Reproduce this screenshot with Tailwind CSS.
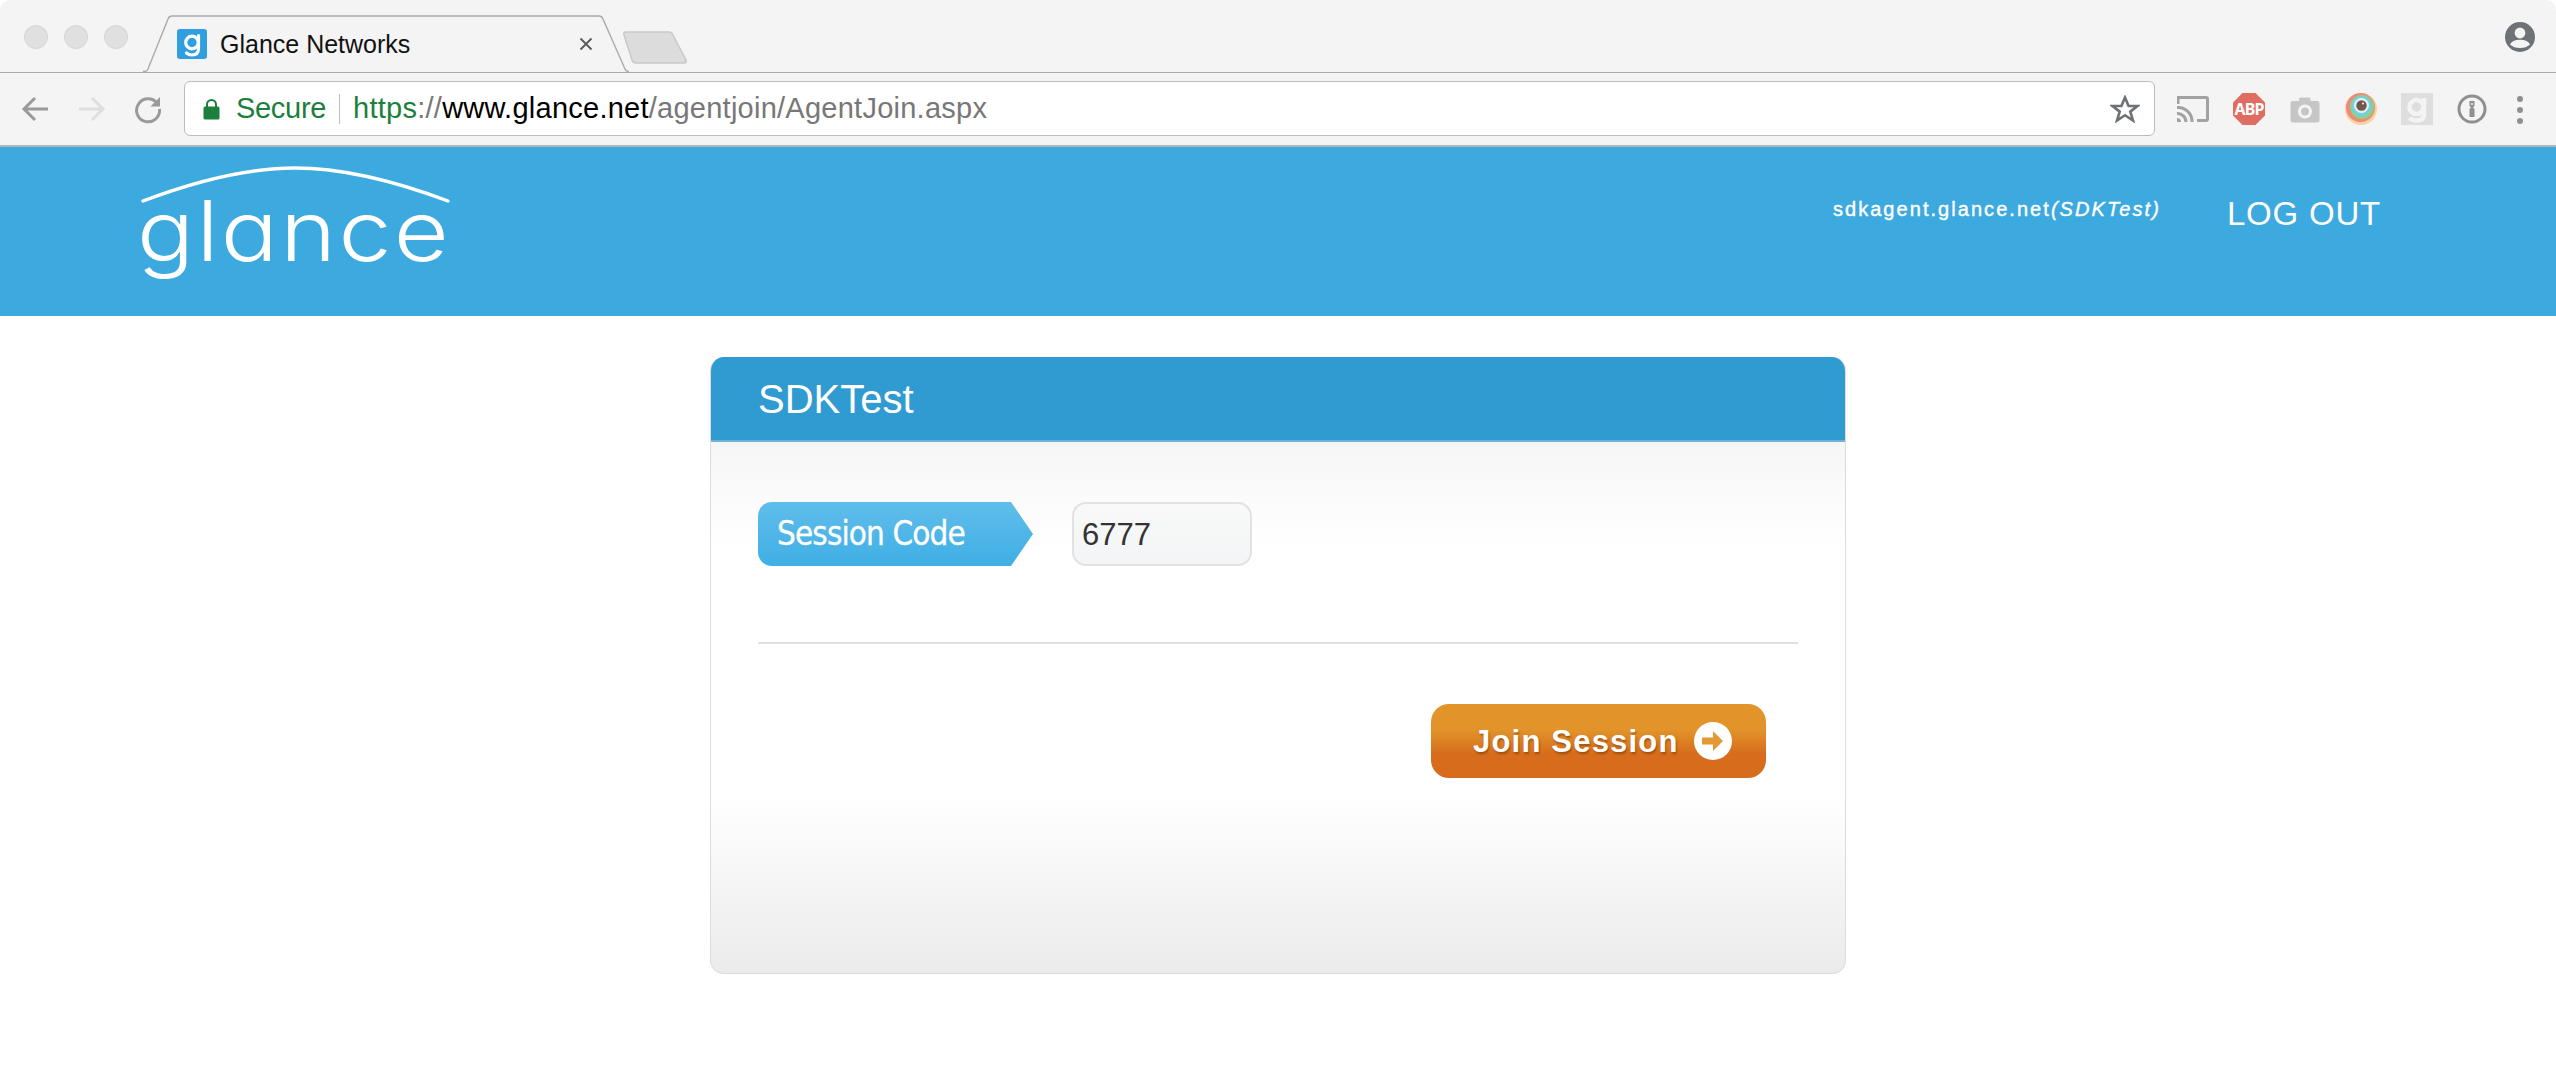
<!DOCTYPE html>
<html><head><meta charset="utf-8">
<script src="https://cdn.jsdelivr.net/npm/@tailwindcss/browser@4"></script>
</head>
<body class="bg-white font-['Liberation_Sans',sans-serif]">
<div class="w-[2556px] h-[1073px] overflow-hidden flex flex-col bg-white">
  <!-- tab strip -->
  <div class="h-[73px] bg-[#f4f4f4] rounded-t-[10px] border-b border-[#a9a9a9] flex items-end pl-[24px] relative">
    <div class="flex gap-[16px] h-[71px] items-center w-[119px] self-start pt-[3px]">
      <span class="w-[24px] h-[24px] rounded-full bg-[#e0e0e0] border border-[#d4d4d4]"></span>
      <span class="w-[24px] h-[24px] rounded-full bg-[#e0e0e0] border border-[#d4d4d4]"></span>
      <span class="w-[24px] h-[24px] rounded-full bg-[#e0e0e0] border border-[#d4d4d4]"></span>
    </div>
    <div class="relative w-[487px] h-[58px] flex items-center pl-[34px] -mb-[1px]">
      <svg class="absolute left-0 top-0" width="487" height="58" viewBox="0 0 487 58"><path d="M0 56.5H2.5Q4 56.5 5 54L25 4Q26 1 29 1H456Q459 1 460 4L482 54Q483 56.5 486 56.5" fill="#f4f4f4" stroke="#ababab" stroke-width="1.4"/></svg>
      <svg class="relative shrink-0" width="30" height="30" viewBox="0 0 30 30"><rect width="30" height="30" rx="3" fill="#2f9fe2"/><path d="M21.5 6.5V19.5Q21.5 26 15 26Q11.5 26 9.5 24" fill="none" stroke="#fff" stroke-width="3.2" stroke-linecap="round"/><circle cx="15" cy="13.5" r="6.3" fill="none" stroke="#fff" stroke-width="3.2"/></svg>
      <span class="relative ml-[13px] text-[25px] leading-none text-[#111] w-[359px]">Glance Networks</span>
      <svg class="relative" width="14" height="14" viewBox="0 0 14 14"><path d="M1.5 1.5L12.5 12.5M12.5 1.5L1.5 12.5" stroke="#5a5a5a" stroke-width="1.8"/></svg>
    </div>
    <svg class="self-start mt-[31px] -ml-[9px]" width="68" height="34" viewBox="0 0 68 34"><path d="M3 4Q2 1 5 1H48Q51 1 52 4L65 29Q66 32 63 32H15Q12 32 11 29Z" fill="#dcdcdc" stroke="#c9c9c9" stroke-width="1.5"/></svg>
    <svg class="absolute left-[2505px] top-[22px]" width="30" height="30" viewBox="0 0 30 30"><circle cx="15" cy="15" r="15" fill="#6e7175"/><circle cx="15" cy="11" r="5.4" fill="#f4f4f4"/><path d="M5 22.5Q7 17.8 15 17.8Q23 17.8 25 22.5Q21 26 15 26Q9 26 5 22.5Z" fill="#f4f4f4"/></svg>
  </div>
  <!-- toolbar -->
  <div class="h-[74px] bg-[#f4f4f4] border-b-2 border-[#b5b5b5] flex items-center pl-[20px] pb-[1px]">
    <svg width="32" height="30" viewBox="0 0 32 30"><path d="M28 15H4M15 4L4 15L15 26" fill="none" stroke="#9a9a9a" stroke-width="3"/></svg>
    <svg class="ml-[23px]" width="32" height="30" viewBox="0 0 32 30"><path d="M4 15H28M17 4L28 15L17 26" fill="none" stroke="#dedede" stroke-width="3"/></svg>
    <svg class="ml-[26px]" width="30" height="30" viewBox="0 0 30 30"><path d="M25 10.5A11.5 11.5 0 1 0 26.5 15" fill="none" stroke="#9a9a9a" stroke-width="3"/><path d="M27 3V12.5H17.5Z" fill="#9a9a9a"/></svg>
    <div class="ml-[21px] w-[1971px] h-[55px] bg-white border border-[#bcbcbc] rounded-[6px] flex items-center pl-[18px] pr-[14px]">
      <svg width="17" height="22" viewBox="0 0 17 22"><path d="M4 9V6.5A4.5 4.5 0 0 1 13 6.5V9" fill="none" stroke="#1c7f3c" stroke-width="2"/><rect x="0.5" y="8.5" width="16" height="13" rx="1.5" fill="#1c7f3c"/></svg>
      <span class="ml-[16px] text-[29px] leading-none text-[#1c7f3c] tracking-[-0.3px]">Secure</span>
      <span class="ml-[13px] w-[1px] h-[30px] bg-[#bdbdbd]"></span>
      <span class="ml-[13px] text-[29px] leading-none tracking-[0.25px]"><span class="text-[#1c7f3c]">https</span><span class="text-[#777]">://</span><span class="text-black">www.glance.net</span><span class="text-[#777]">/agentjoin/AgentJoin.aspx</span></span>
      <svg class="ml-auto" width="30" height="28" viewBox="0 0 30 28"><path d="M15 2.5L18.6 11H27.5L20.3 16.6L23 25.5L15 20.2L7 25.5L9.7 16.6L2.5 11H11.4Z" fill="none" stroke="#6e7175" stroke-width="2.6" stroke-linejoin="miter"/></svg>
    </div>
    <div class="flex items-center ml-[22px] h-[40px] relative w-[370px]">
      <svg class="absolute left-0 top-[7px]" width="32" height="26" viewBox="0 0 32 26"><path d="M1 8V1.5H29Q30.5 1.5 30.5 3V23Q30.5 24.5 29 24.5H20" fill="none" stroke="#a2a2a2" stroke-width="3"/><path d="M0 11.5A14 14 0 0 1 15 26M0 17.5A8.5 8.5 0 0 1 9 26" fill="none" stroke="#a2a2a2" stroke-width="3"/><path d="M0 22A4 4 0 0 1 4 26H0Z" fill="#a2a2a2"/></svg>
      <svg class="absolute left-[56px] top-[4px]" width="32" height="32" viewBox="0 0 32 32"><path d="M9.5 0H22.5L32 9.5V22.5L22.5 32H9.5L0 22.5V9.5Z" fill="#e06d62"/></svg>
      <span class="absolute left-[56px] top-[4px] w-[32px] h-[32px] flex items-center justify-center text-white text-[16px] font-bold font-['Noto_Sans',sans-serif] leading-none tracking-[-0.8px]">ABP</span>
      <svg class="absolute left-[113px] top-[8px]" width="30" height="26" viewBox="0 0 30 26"><path d="M3 4H9V2Q9 0.5 10.5 0.5H19Q20.5 0.5 20.5 2V4H27Q29.5 4 29.5 6.5V23Q29.5 25.5 27 25.5H3Q0.5 25.5 0.5 23V6.5Q0.5 4 3 4Z" fill="#c6c6c6"/><circle cx="15" cy="14.5" r="5.5" fill="none" stroke="#f4f4f4" stroke-width="3"/></svg>
      <svg class="absolute left-[168px] top-[4px]" width="32" height="32" viewBox="0 0 32 32"><circle cx="16" cy="16" r="16" fill="#f9d39f"/><circle cx="15.5" cy="14.5" r="14.5" fill="#ee8a78"/><circle cx="17" cy="14" r="12" fill="#8dcf8f"/><circle cx="16.5" cy="13" r="10" fill="#75cfe3"/><circle cx="16.5" cy="12.5" r="7.5" fill="#dff3f5"/><circle cx="16.5" cy="12.5" r="5.2" fill="#77544b"/><circle cx="18" cy="10.5" r="1" fill="#fff"/></svg>
      <svg class="absolute left-[224px] top-[4px]" width="32" height="32" viewBox="0 0 32 32"><rect width="32" height="32" fill="#dedede"/><path d="M23 5V21Q23 27.5 15.5 27.5Q11 27.5 8.5 25" fill="none" stroke="#f4f4f4" stroke-width="4.5"/><circle cx="15.5" cy="14" r="7" fill="none" stroke="#f4f4f4" stroke-width="4.5"/></svg>
      <svg class="absolute left-[280px] top-[5px]" width="30" height="30" viewBox="0 0 30 30"><circle cx="15" cy="15" r="13" fill="none" stroke="#8f8f8f" stroke-width="3"/><path d="M12.5 7H17.5V12L16 13.5L17.5 15V23H12.5V15L14 13.5L12.5 12Z" fill="#8f8f8f"/><circle cx="15" cy="10" r="1" fill="#f4f4f4"/></svg>
      <div class="absolute left-[340px] top-[7px] flex flex-col gap-[5px]">
        <span class="w-[6px] h-[6px] rounded-full bg-[#8f8f8f]"></span>
        <span class="w-[6px] h-[6px] rounded-full bg-[#8f8f8f]"></span>
        <span class="w-[6px] h-[6px] rounded-full bg-[#8f8f8f]"></span>
      </div>
    </div>
  </div>
  <!-- site header -->
  <header class="h-[169px] bg-[#3ca9df] flex items-start relative shrink-0">
    <div class="relative ml-[140px] w-[310px] h-[140px] mt-[19px]">
      <svg class="absolute left-0 top-0" width="312" height="40" viewBox="0 0 312 40"><path d="M3 35Q90 2 155 2Q220 2 308 35" fill="none" stroke="#fff" stroke-width="3.4" stroke-linecap="round"/></svg>
      <span class="absolute left-[-3px] top-[15px] inline-block origin-left scale-x-[1.13] text-[84px] leading-[100px] font-['Inter',sans-serif] font-light text-white tracking-[2px] [font-feature-settings:'cv11']">glance</span>
    </div>
    <div class="ml-auto mt-[50px] flex items-start">
      <span class="text-white text-[20px] leading-[24px] tracking-[2.05px] [-webkit-text-stroke:0.4px_white]">sdkagent.glance.net<i>(SDKTest)</i></span>
      <span class="ml-[66px] -mt-[3px] mr-[175px] text-white text-[33px] leading-[40px] tracking-[0.8px]">LOG OUT</span>
    </div>
  </header>
  <!-- card -->
  <main class="mt-[41px] ml-[710px] w-[1136px] h-[617px] rounded-[14px] overflow-hidden border-x-[1.5px] border-b-[1.5px] border-[#dcdcdc] bg-[linear-gradient(to_bottom,#f6f6f6_85px,#ffffff_190px,#ffffff_440px,#ebebeb_100%)] flex flex-col">
    <div class="h-[85px] -mx-[2px] bg-[#2f9bd1] border-b-2 border-[#6fb4d8] flex items-center pl-[49px] shrink-0">
      <h1 class="text-white text-[40px] leading-none">SDKTest</h1>
    </div>
    <div class="flex items-center mt-[60px] ml-[47px]">
      <div class="w-[275px] h-[64px] bg-[linear-gradient(to_bottom,#60bdea,#3fafe5)] [clip-path:polygon(0_0,92%_0,100%_50%,92%_100%,0_100%)] rounded-l-[14px] flex items-center pl-[19px] pb-[2px]">
        <span class="text-white text-[33px] leading-none font-['DejaVu_Sans_Condensed','DejaVu_Sans',sans-serif] tracking-[-0.9px] [font-stretch:condensed] [-webkit-text-stroke:0.3px_white]">Session Code</span>
      </div>
      <div class="ml-[39px] w-[180px] h-[64px] rounded-[14px] border-2 border-[#e2e2e2] bg-[linear-gradient(to_bottom,#f8f9f8,#f3f5f6)] flex items-center pl-[8px]">
        <span class="text-[31px] leading-none text-[#333]">6777</span>
      </div>
    </div>
    <div class="mt-[76px] ml-[47px] w-[1040px] h-[2px] bg-[#e0e0e0]"></div>
    <div class="mt-[60px] flex">
      <button class="ml-[720px] w-[335px] h-[74px] rounded-[18px] bg-[linear-gradient(to_bottom,#e2932a_0,#e2932a_35%,#d66c1c_68%,#d66c1c_100%)] flex items-center pl-[42px]">
        <span class="text-white text-[31px] font-bold leading-none tracking-[1.2px] [text-shadow:1px_2px_2px_rgba(120,60,0,.6)]">Join Session</span>
        <svg class="ml-[14px] shrink-0" width="40" height="40" viewBox="0 0 40 40"><circle cx="20" cy="20" r="19" fill="#fff"/><path d="M9 16.5H20V10L30 20L20 30V23.5H9Z" fill="#e39a35"/></svg>
      </button>
    </div>
  </main>
</div>
</body></html>
